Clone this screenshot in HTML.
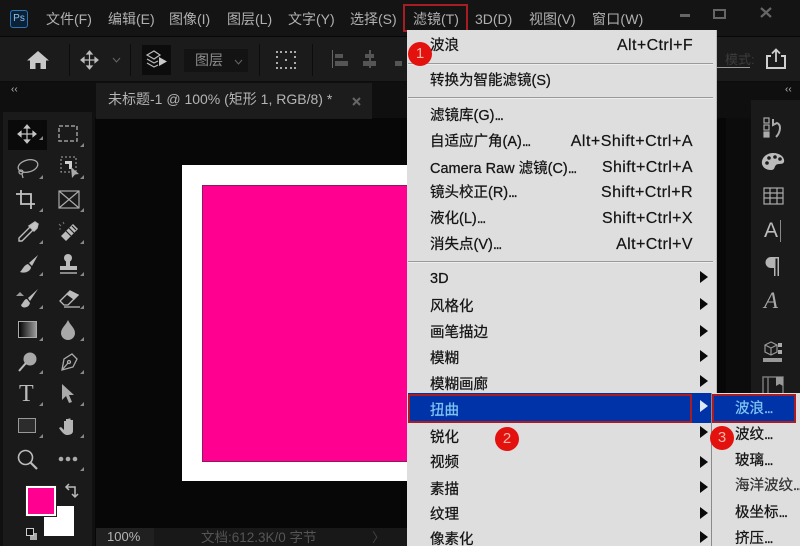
<!DOCTYPE html>
<html><head><meta charset="utf-8"><style>
html,body{margin:0;padding:0;background:#070707}
#r{position:relative;width:800px;height:546px;overflow:hidden;background:#070707;font-family:"Liberation Sans","Noto Sans CJK SC",sans-serif}
.a{position:absolute}
.t{position:absolute;white-space:nowrap;line-height:20px;height:20px}
.tm{color:#b0b0b0;font-size:14px;top:9px}
.m{color:#141414;font-size:14.5px;left:430px;margin-top:1px;-webkit-text-stroke:.25px currentColor}
.s{color:#141414;font-size:16px;letter-spacing:.4px;right:107px;margin-top:1px;-webkit-text-stroke:.2px currentColor}
.sub{color:#141414;font-size:14.5px;left:735px;margin-top:1px;-webkit-text-stroke:.25px currentColor}
i{font-style:normal;letter-spacing:-1.3px}
.sep{position:absolute;left:408px;width:305px;height:1px;background:#9a9a9a;border-bottom:1px solid #ededed}
.arr{position:absolute;left:700px;width:0;height:0;border-left:8px solid #0a0a0a;border-top:6px solid transparent;border-bottom:6px solid transparent}
.c{position:absolute;width:24px;height:24px;border-radius:50%;background:#e3120f;color:#f5b5a5;font-size:15px;line-height:24px;text-align:center}
.rb{position:absolute;border:2px solid #a81c24;box-sizing:border-box}
svg{position:absolute;overflow:visible}
.tri{position:absolute;width:0;height:0;border-right:4px solid #888;border-top:4px solid transparent}
</style></head><body><div id="r">

<div class="a" style="left:0;top:0;width:800px;height:36px;background:#141414"></div>
<div class="a" style="left:0;top:37px;width:800px;height:44px;background:#1b1b1b"></div>
<div class="a" style="left:0;top:81px;width:800px;height:1px;background:#0c0c0c"></div>
<div class="a" style="left:0;top:82px;width:800px;height:36px;background:#0f0f0f"></div>
<div class="a" style="left:96px;top:83px;width:276px;height:36px;background:#1c1c1c"></div>

<div class="a" style="left:10px;top:10px;width:16px;height:16px;border:1px solid #2f74b5;border-radius:3px;background:#0b2136;color:#8fc3ee;font-size:10px;line-height:16px;text-align:center">Ps</div>
<div class="t tm" style="left:46px">文件(F)</div>
<div class="t tm" style="left:108px">编辑(E)</div>
<div class="t tm" style="left:169px">图像(I)</div>
<div class="t tm" style="left:227px">图层(L)</div>
<div class="t tm" style="left:288px">文字(Y)</div>
<div class="t tm" style="left:350px">选择(S)</div>
<div class="t tm" style="left:413px">滤镜(T)</div>
<div class="t tm" style="left:475px">3D(D)</div>
<div class="t tm" style="left:529px">视图(V)</div>
<div class="t tm" style="left:592px;letter-spacing:.2px">窗口(W)</div>
<div class="rb" style="left:403px;top:4px;width:65px;height:28px"></div>

<div class="a" style="left:680px;top:14px;width:10px;height:3px;background:#666"></div>
<div class="a" style="left:713px;top:9px;width:9px;height:6px;border:2px solid #666"></div>
<svg style="left:759px;top:7px" width="14" height="12"><path d="M2 1L12 10M12 1L2 10" stroke="#666" stroke-width="2.2"/></svg>

<svg style="left:27px;top:50px" width="22" height="20"><path d="M11 1L22 10.5H19V19H13.5V13H8.5V19H3V10.5H0Z" fill="#c8c8c8"/></svg>
<div class="a" style="left:69px;top:44px;width:1px;height:32px;background:#0d0d0d"></div>
<svg style="left:80px;top:50px" width="20" height="20" fill="none" stroke="#bdbdbd" stroke-width="1.2"><path d="M9.5 2V18M2 10H17"/><path d="M7 4L9.5 1L12 4ZM7 16L9.5 19L12 16ZM4 7.5L1 10L4 12.5ZM15 7.5L18 10L15 12.5Z" fill="#bdbdbd"/></svg>
<svg style="left:112px;top:58px" width="9" height="5" fill="none" stroke="#666"><path d="M1 0L4.5 4L8 0"/></svg>
<div class="a" style="left:130px;top:44px;width:1px;height:32px;background:#0d0d0d"></div>
<div class="a" style="left:142px;top:45px;width:29px;height:30px;background:#0c0c0c"></div>
<svg style="left:146px;top:49px" width="22" height="22" fill="none" stroke="#bbb" stroke-width="1.2"><path d="M1 6L8 2L14 6L8 10ZM1 10L8 14L12 12M1 14L8 18L12 16"/><path d="M13 8L21 12.500L13 17Z" fill="#c8c8c8" stroke="none"/></svg>
<div class="a" style="left:184px;top:49px;width:64px;height:23px;background:#131313"></div>
<div class="t" style="left:195px;top:50px;color:#8d8d8d;font-size:14px">图层</div>
<svg style="left:234px;top:60px" width="9" height="5" fill="none" stroke="#666"><path d="M1 0L4.500 4L8 0"/></svg>
<div class="a" style="left:259px;top:44px;width:1px;height:32px;background:#0d0d0d"></div>
<svg style="left:276px;top:50px" width="20" height="20" fill="#aaa"><g><rect x="0" y="1" width="2" height="2"/><rect x="4" y="1" width="2" height="2"/><rect x="9" y="1" width="2" height="2"/><rect x="14" y="1" width="2" height="2"/><rect x="18" y="1" width="2" height="2"/><rect x="0" y="6" width="2" height="2"/><rect x="18" y="6" width="2" height="2"/><rect x="9" y="9" width="2" height="2"/><rect x="0" y="12" width="2" height="2"/><rect x="18" y="12" width="2" height="2"/><rect x="0" y="17" width="2" height="2"/><rect x="4" y="17" width="2" height="2"/><rect x="9" y="17" width="2" height="2"/><rect x="14" y="17" width="2" height="2"/><rect x="18" y="17" width="2" height="2"/></g></svg>
<div class="a" style="left:312px;top:44px;width:1px;height:32px;background:#0d0d0d"></div>
<svg style="left:332px;top:49px" width="70" height="22" fill="#555"><rect x="0" y="1" width="1" height="18" fill="#666"/><rect x="3" y="5" width="8" height="4"/><rect x="3" y="12" width="13" height="5"/><rect x="37" y="1" width="2" height="18"/><rect x="33" y="5" width="9" height="4"/><rect x="31" y="12" width="13" height="5"/><rect x="63" y="12" width="7" height="5"/></svg>

<div class="t" style="left:725px;top:50px;color:#3c3c3c;font-size:13px">模式:</div>
<div class="a" style="left:716px;top:67px;width:34px;height:1px;background:#9a9a9a"></div>
<svg style="left:765px;top:48px" width="22" height="22" fill="none" stroke="#cfcfcf" stroke-width="2"><path d="M6 8H2V20H20V8H16"/><path d="M11 14V2M7 5.500L11 1.500L15 5.500" stroke-width="1.800"/></svg>

<div class="t" style="left:11px;top:80px;color:#bbb;font-size:10px">‹‹</div>
<div class="t" style="left:785px;top:80px;color:#bbb;font-size:10px">‹‹</div>
<div class="t" style="left:108px;top:89px;color:#b4b4b4;font-size:14px">未标题-1 @ 100% (矩形 1, RGB/8) *</div>
<svg style="left:351px;top:96px" width="11" height="11"><path d="M2 2L9 9M9 2L2 9" stroke="#666" stroke-width="2"/></svg>

<div class="a" style="left:3px;top:112px;width:89px;height:434px;background:#1a1a1a"></div>
<div class="a" style="left:0;top:112px;width:3px;height:434px;background:#101010"></div>
<div class="a" style="left:92px;top:112px;width:3px;height:434px;background:#101010"></div>
<div class="a" style="left:8px;top:120px;width:39px;height:30px;background:#0a0a0a"></div>

<div class="a" style="left:751px;top:100px;width:49px;height:446px;background:#1a1a1a"></div>
<div class="a" style="left:726px;top:118px;width:25px;height:428px;background:#0c0c0c"></div>

<svg style="left:17px;top:124px" width="20" height="20" fill="none" stroke="#c4c4c4" stroke-width="1.200"><path d="M10 2V18M2 10H18"/><path d="M7.500 4L10 1L12.500 4ZM7.500 16L10 19L12.500 16ZM4 7.500L1 10L4 12.500ZM16 7.500L19 10L16 12.500Z" fill="#c4c4c4"/></svg>
<svg style="left:58px;top:125px" width="20" height="18" fill="none" stroke="#999" stroke-width="1.500" stroke-dasharray="4 2"><rect x="1" y="1" width="18" height="15"/></svg>
<svg style="left:17px;top:158px" width="22" height="22" fill="none" stroke="#aaa" stroke-width="1.300"><ellipse cx="11" cy="8" rx="10" ry="6" transform="rotate(-15 11 8)"/><circle cx="4" cy="14" r="2"/><path d="M5 16L6 20"/></svg>
<svg style="left:60px;top:156px" width="22" height="24" fill="#cfcfcf"><rect x="1" y="1" width="15" height="15" fill="none" stroke="#aaa" stroke-dasharray="2 2"/><path d="M5 5H12V13H9V8H5Z"/><path d="M11 11L19 18L15 18.500L12 22Z" fill="#aaa"/></svg>
<svg style="left:16px;top:189px" width="24" height="24" fill="none" stroke="#c4c4c4" stroke-width="1.800"><path d="M5 1V15H19M0 5H15V20"/></svg>
<svg style="left:58px;top:190px" width="22" height="20" fill="none" stroke="#aaa" stroke-width="1.200"><rect x="1" y="1" width="20" height="17"/><path d="M1 1L21 18M21 1L1 18"/></svg>
<svg style="left:17px;top:221px" width="22" height="22" fill="none" stroke="#bbb" stroke-width="1.400"><path d="M13 6L2 17V20H5L16 9"/><path d="M12 5L17 10L20 7L21 3L18 1L15 3Z" fill="#c4c4c4"/></svg>
<svg style="left:58px;top:221px" width="22" height="22"><path d="M3 15L15 3L20 8L8 20Z" fill="#bbb"/><path d="M8 10L13 15M11 7L16 12M14 5L18 9" stroke="#222" stroke-width="1.200"/><path d="M1 3L3 5M5 1L6 3M1 8L3 8" stroke="#777"/></svg>
<svg style="left:17px;top:254px" width="22" height="22"><path d="M21 1L12 9L15 12ZM11 10C7 11 6 15 3 18C8 20 14 17 14 13Z" fill="#bbb"/></svg>
<svg style="left:59px;top:253px" width="22" height="22" fill="#bbb"><circle cx="9" cy="5" r="4"/><rect x="7" y="8" width="4" height="5"/><rect x="1" y="13" width="17" height="4"/><rect x="1" y="19" width="17" height="2" fill="#888"/></svg>
<svg style="left:15px;top:288px" width="24" height="22"><path d="M23 1L13 10L15 13ZM12 11C9 11 9 14 6 17C7 21 14 20 15 15Z" fill="#bbb"/><path d="M1 8L5 4L9 8Z" fill="#999"/></svg>
<svg style="left:58px;top:288px" width="24" height="22" fill="none" stroke="#bbb" stroke-width="1.300"><path d="M2 13L12 3L20 7L10 17H6Z"/><path d="M9 6L16 11L20 7L12 3Z" fill="#bbb"/><path d="M6 19H22"/></svg>
<div class="a" style="left:18px;top:321px;width:17px;height:15px;border:1.500px solid #aaa;background:linear-gradient(90deg,#050505,#999)"></div>
<svg style="left:60px;top:320px" width="16" height="20"><path d="M8 0C10 5 15 8 15 13A7 7 0 0 1 1 13C1 8 6 5 8 0Z" fill="#a8a8a8"/></svg>
<svg style="left:17px;top:351px" width="22" height="22"><circle cx="13" cy="8" r="6.500" fill="#a8a8a8"/><path d="M9 12L2 20" stroke="#bbb" stroke-width="2"/></svg>
<svg style="left:59px;top:352px" width="20" height="20" fill="none" stroke="#aaa" stroke-width="1.300"><path d="M13 2L18 7L14 15L3 18L5 7Z"/><path d="M3 18L9 11"/><circle cx="10" cy="10" r="1.500"/></svg>
<div class="t" style="left:19px;top:382px;color:#bbb;font-size:24px;font-family:'Liberation Serif',serif;line-height:24px;height:24px">T</div>
<svg style="left:60px;top:383px" width="16" height="22"><path d="M2 1L2 17L6 13L9 20L12 19L9 12L14 12Z" fill="#aaa"/></svg>
<div class="a" style="left:18px;top:418px;width:16px;height:13px;border:1.500px solid #999;background:#2c2c2c"></div>
<svg style="left:59px;top:416px" width="18" height="20"><path d="M2 11L5 14V5H7V10V3H9.500V10V2.500H11.500V10V4H14V15C14 18 11 19 8 19C5 19 2 15 0 12Z" fill="#b4b4b4"/></svg>
<svg style="left:17px;top:449px" width="22" height="22" fill="none" stroke="#bbb" stroke-width="1.600"><circle cx="8.500" cy="8.500" r="7"/><path d="M13.500 13.500L20 20" stroke-width="2.200"/></svg>
<svg style="left:58px;top:456px" width="20" height="6" fill="#aaa"><circle cx="3" cy="3" r="2.300"/><circle cx="10" cy="3" r="2.300"/><circle cx="17" cy="3" r="2.300"/></svg>

<div class="tri" style="left:39px;top:136px"></div><div class="tri" style="left:80px;top:143px"></div>
<div class="tri" style="left:39px;top:175px"></div><div class="tri" style="left:80px;top:175px"></div>
<div class="tri" style="left:39px;top:208px"></div><div class="tri" style="left:80px;top:208px"></div>
<div class="tri" style="left:39px;top:240px"></div><div class="tri" style="left:80px;top:240px"></div>
<div class="tri" style="left:39px;top:272px"></div><div class="tri" style="left:80px;top:272px"></div>
<div class="tri" style="left:39px;top:305px"></div><div class="tri" style="left:80px;top:305px"></div>
<div class="tri" style="left:39px;top:337px"></div><div class="tri" style="left:80px;top:337px"></div>
<div class="tri" style="left:39px;top:370px"></div><div class="tri" style="left:80px;top:370px"></div>
<div class="tri" style="left:39px;top:402px"></div><div class="tri" style="left:80px;top:402px"></div>
<div class="tri" style="left:39px;top:434px"></div><div class="tri" style="left:80px;top:434px"></div>
<div class="tri" style="left:80px;top:467px"></div>

<div class="a" style="left:44px;top:506px;width:30px;height:30px;background:#fff"></div>
<div class="a" style="left:26px;top:486px;width:30px;height:30px;box-sizing:border-box;background:#ff0090;border:2px solid #fff;outline:1px solid #222"></div>
<svg style="left:65px;top:483px" width="14" height="16" fill="none" stroke="#bbb" stroke-width="1.500"><path d="M2 4H10V13"/><path d="M4 1L1 4L4 7M7 11L10 14L13 11"/></svg>
<div class="a" style="left:30px;top:533px;width:7px;height:7px;background:#aaa"></div>
<div class="a" style="left:26px;top:528px;width:6px;height:6px;background:#111;border:1px solid #ccc"></div>

<div class="a" style="left:182px;top:165px;width:226px;height:316px;background:#fff"></div>
<div class="a" style="left:203px;top:186px;width:205px;height:275px;background:#ff0090;box-shadow:0 0 0 1px #8c1a60"></div>

<div class="a" style="left:96px;top:528px;width:315px;height:18px;background:#181818"></div>
<div class="a" style="left:96px;top:528px;width:58px;height:18px;background:#202020"></div>
<div class="t" style="left:107px;top:527px;color:#b4b4b4;font-size:13px">100%</div>
<div class="t" style="left:201px;top:528px;color:#555;font-size:13.500px">文档:612.3K/0 字节</div>
<div class="t" style="left:372px;top:528px;color:#444;font-size:13px">〉</div>

<svg style="left:763px;top:117px" width="22" height="22" fill="none" stroke="#aaa" stroke-width="1.200"><rect x="1" y="1" width="5" height="5"/><rect x="1" y="8" width="5" height="5"/><rect x="1" y="15" width="5" height="5" fill="#aaa"/><path d="M10 2V8L14 6C19 8 17 16 13 20" stroke-width="2"/></svg>
<svg style="left:761px;top:152px" width="24" height="19"><path d="M12 1C20 1 24 6 23 10C22 13 17 11 15 13C13 15 14 18 10 18C4 18 0 14 1 9C2 4 7 1 12 1Z" fill="#bbb"/><g fill="#1a1a1a"><circle cx="6" cy="11" r="1.800"/><circle cx="8" cy="6" r="1.800"/><circle cx="14" cy="5" r="1.800"/><circle cx="19" cy="7" r="1.800"/></g></svg>
<svg style="left:763px;top:187px" width="21" height="18" fill="none" stroke="#aaa" stroke-width="1.200"><rect x="1" y="1" width="19" height="16"/><path d="M7 1V17M14 1V17M1 6H20M1 11H20"/></svg>
<div class="t" style="left:764px;top:218px;color:#bbb;font-size:21px;line-height:26px;height:26px">A</div>
<div class="a" style="left:780px;top:220px;width:1px;height:22px;background:#888"></div>
<svg style="left:765px;top:256px" width="16" height="21"><path d="M14 1H6A5.500 5.500 0 0 0 6 12H9V20H10.500V2.500H12.500V20H14Z" fill="#b4b4b4"/></svg>
<div class="t" style="left:764px;top:288px;color:#aaa;font-size:23px;font-style:italic;font-family:'Liberation Serif',serif;line-height:26px;height:26px">A</div>
<svg style="left:763px;top:341px" width="20" height="22" fill="none" stroke="#999"><path d="M2 4L8 1L14 4V11L8 14L2 11ZM2 4L8 7L14 4M8 7V14" stroke-width="1.200"/><rect x="15" y="2" width="4" height="4" fill="#aaa" stroke="none"/><rect x="15" y="9" width="4" height="4" fill="#aaa" stroke="none"/><rect x="0" y="17" width="19" height="4" fill="#999" stroke="none"/></svg>
<svg style="left:762px;top:376px" width="22" height="20" fill="none" stroke="#777" stroke-width="1.500"><path d="M1 20V1H21V20M6 1V20"/><path d="M14 1H21V10L17.500 8L14 10Z" fill="#999" stroke="none"/></svg>

<div class="a" style="left:407px;top:30px;width:309px;height:516px;background:#dedede;box-shadow:1px 0 0 #bbb"></div>
<div class="sep" style="top:63px"></div>
<div class="sep" style="top:97px"></div>
<div class="sep" style="top:261px"></div>

<div class="t m" style="top:35px">波浪</div><div class="t s" style="top:35px">Alt+Ctrl+F</div>
<div class="t m" style="top:70px">转换为智能滤镜(S)</div>
<div class="t m" style="top:105px">滤镜库(G)<i>...</i></div>
<div class="t m" style="top:131px">自适应广角(A)<i>...</i></div><div class="t s" style="top:131px;letter-spacing:.5px">Alt+Shift+Ctrl+A</div>
<div class="t m" style="top:158px">Camera Raw 滤镜(C)<i>...</i></div><div class="t s" style="top:157px">Shift+Ctrl+A</div>
<div class="t m" style="top:182px">镜头校正(R)<i>...</i></div><div class="t s" style="top:182px">Shift+Ctrl+R</div>
<div class="t m" style="top:208px">液化(L)<i>...</i></div><div class="t s" style="top:208px">Shift+Ctrl+X</div>
<div class="t m" style="top:234px">消失点(V)<i>...</i></div><div class="t s" style="top:234px">Alt+Ctrl+V</div>
<div class="t m" style="top:268px">3D</div><div class="arr" style="top:271px"></div>
<div class="t m" style="top:296px">风格化</div><div class="arr" style="top:298px"></div>
<div class="t m" style="top:322px">画笔描边</div><div class="arr" style="top:325px"></div>
<div class="t m" style="top:348px">模糊</div><div class="arr" style="top:350px"></div>
<div class="t m" style="top:374px">模糊画廊</div><div class="arr" style="top:375px"></div>

<div class="a" style="left:408px;top:393px;width:308px;height:30px;background:#0032a8"></div>
<div class="t m" style="top:400px;color:#7fc4f2">扭曲</div>
<div class="arr" style="top:400px;border-left-color:#dfe8f5"></div>
<div class="rb" style="left:408px;top:394px;width:284px;height:29px"></div>

<div class="t m" style="top:427px">锐化</div><div class="arr" style="top:426px"></div>
<div class="t m" style="top:452px">视频</div><div class="arr" style="top:456px"></div>
<div class="t m" style="top:479px">素描</div><div class="arr" style="top:481px"></div>
<div class="t m" style="top:504px">纹理</div><div class="arr" style="top:507px"></div>
<div class="t m" style="top:529px">像素化</div><div class="arr" style="top:531px"></div>

<div class="a" style="left:711px;top:393px;width:89px;height:153px;background:#dedede"></div>
<div class="a" style="left:711px;top:393px;width:1px;height:153px;background:#8a8a8a"></div>
<div class="a" style="left:713px;top:395px;width:82px;height:27px;background:#0032a8"></div>
<div class="rb" style="left:712px;top:394px;width:84px;height:29px"></div>
<div class="t sub" style="top:398px;color:#7fc4f2">波浪<i>...</i></div>
<div class="t sub" style="top:424px">波纹<i>...</i></div>
<div class="t sub" style="top:450px">玻璃<i>...</i></div>
<div class="t sub" style="top:475px;color:#333">海洋波纹<i>...</i></div>
<div class="t sub" style="top:502px">极坐标<i>...</i></div>
<div class="t sub" style="top:528px">挤压<i>...</i></div>

<div class="c" style="left:408px;top:42px">1</div>
<div class="c" style="left:495px;top:427px">2</div>
<div class="c" style="left:710px;top:426px">3</div>

</div></body></html>
